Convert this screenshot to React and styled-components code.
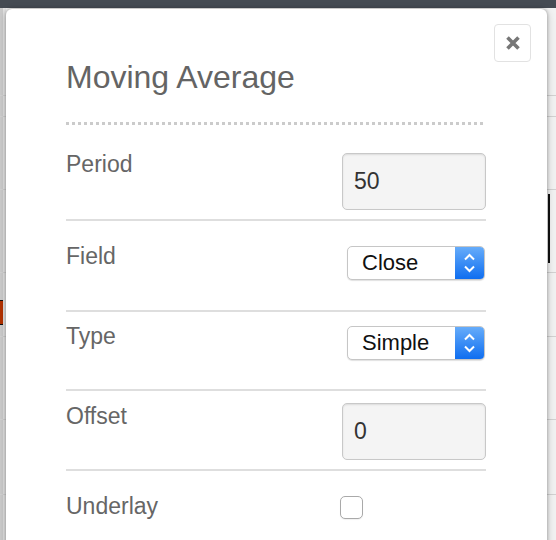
import React from 'react';
import styled, { createGlobalStyle } from 'styled-components';

const GlobalStyle = createGlobalStyle`
    body {
        margin: 0;
        font-family: 'Liberation Sans', Arial, sans-serif;
        background: #f0f0f0;
    }
`;

const Page = styled.div`
    position: relative;
    width: 556px;
    height: 540px;
    overflow: hidden;
    background: linear-gradient(to right, #cbcbcb 0, #cbcbcb 3px, #e4e4e4 3px, #e4e4e4 6px, #f2f2f2 6px);
`;

const Backdrop = styled.div`
    display: flex;
    flex-direction: column;
`;

const TopBar = styled.div`
    height: 8px;
    background: #454b53;
`;

const BgRow = styled.div`
    box-sizing: border-box;
    height: ${(p) => p.$h}px;
    border-bottom: 1px solid #d2d2d2;
    display: flex;
    justify-content: space-between;
    align-items: flex-start;
`;

const RedMark = styled.div`
    margin-top: 27px;
    width: 3px;
    height: 23px;
    background: #b33200;
    border-top: 1px solid #111;
    border-bottom: 1px solid #111;
`;

const BlackMark = styled.div`
    margin: 4px 6px 0 auto;
    width: 2px;
    height: 69px;
    background: #111;
`;

const Dialog = styled.div`
    position: absolute;
    left: 6px;
    top: 9px;
    width: 541px;
    height: 580px;
    box-sizing: border-box;
    padding: 50px 61px 0 60px;
    background: #fff;
    border-radius: 6px;
    box-shadow: 0 0 3px 1px rgba(0, 0, 0, 0.18), 0 2px 8px rgba(0, 0, 0, 0.22);
`;

const CloseButton = styled.button`
    position: absolute;
    top: 15px;
    right: 16px;
    width: 37px;
    height: 38px;
    padding: 0;
    display: flex;
    align-items: center;
    justify-content: center;
    background: #fff;
    border: 1px solid #e2e2e2;
    border-radius: 4px;
`;

const Title = styled.h1`
    margin: 0;
    font-size: 32px;
    line-height: 36px;
    font-weight: normal;
    color: #646464;
    padding-bottom: 27px;
`;

const DottedRule = styled.div`
    height: 3px;
    background: repeating-linear-gradient(to right, #cbcbcb 0, #cbcbcb 3px, transparent 3px, transparent 6px);
`;

const Row = styled.div`
    display: flex;
    align-items: flex-start;
    padding: ${(p) => p.$pt}px 0 ${(p) => p.$pb}px;
    border-bottom: ${(p) => (p.$last ? 'none' : '2px solid #dedede')};
`;

const Label = styled.div`
    flex: none;
    width: 276px;
    margin-top: ${(p) => p.$lift || 0}px;
    font-size: 23px;
    line-height: 17px;
    color: #666;
`;

const TextInput = styled.input`
    width: 144px;
    height: 57px;
    box-sizing: border-box;
    margin: 0;
    padding: 0 11px;
    border: 1px solid #c8c8c8;
    border-radius: 5px;
    background: #f4f4f4;
    box-shadow: inset 0 1px 2px rgba(0, 0, 0, 0.1);
    font-family: 'Liberation Sans', Arial, sans-serif;
    font-size: 23px;
    color: #333;
    outline: none;
`;

const SelectBox = styled.div`
    margin-left: 5px;
    width: 138px;
    height: 34px;
    box-sizing: border-box;
    display: flex;
    align-items: stretch;
    border: 1px solid #c6c6c6;
    border-radius: 5px;
    background: #fff;
    box-shadow: 0 1px 1px rgba(0, 0, 0, 0.12);
    overflow: hidden;
`;

const SelectText = styled.span`
    flex: 1;
    display: flex;
    align-items: center;
    padding-left: 14px;
    font-size: 22px;
    color: #111;
`;

const SelectArrows = styled.span`
    width: 29px;
    display: flex;
    align-items: center;
    justify-content: center;
    background: linear-gradient(to bottom, #66acfa, #0f6ef0);
`;

const Checkbox = styled.input`
    appearance: none;
    margin: 0 0 0 -2px;
    width: 23px;
    height: 23px;
    box-sizing: border-box;
    border: 1px solid #a9a9a9;
    border-radius: 5px;
    background: #fff;
    box-shadow: 0 1px 1px rgba(0, 0, 0, 0.06);
`;

const bgRows = [88, 21, 73, 83, 64, 83, 75, 60];

function Select({ value }) {
    return (
        <SelectBox>
            <SelectText>{value}</SelectText>
            <SelectArrows>
                <svg width="29" height="32" viewBox="0 0 29 32">
                    <path d="M10 12.5 L14.5 8 L19 12.5" fill="none" stroke="#fff" strokeWidth="2" />
                    <path d="M10 19.5 L14.5 24 L19 19.5" fill="none" stroke="#fff" strokeWidth="2" />
                </svg>
            </SelectArrows>
        </SelectBox>
    );
}

export default function App() {
    return (
        <>
            <GlobalStyle />
            <Page>
                <Backdrop>
                    <TopBar />
                    {bgRows.map((h, i) => (
                        <BgRow key={i} $h={h}>
                            {i === 4 && <RedMark />}
                            {i === 3 && <BlackMark />}
                        </BgRow>
                    ))}
                </Backdrop>
                <Dialog>
                    <CloseButton>
                        <svg width="16" height="16" viewBox="0 0 16 16">
                            <path d="M2.5 2.5 L13.5 13.5 M13.5 2.5 L2.5 13.5" stroke="#777" strokeWidth="3.6" />
                        </svg>
                    </CloseButton>
                    <Title>Moving Average</Title>
                    <DottedRule />
                    <Row $pt={28} $pb={9}>
                        <Label $lift={3}>Period</Label>
                        <TextInput defaultValue="50" />
                    </Row>
                    <Row $pt={25} $pb={30}>
                        <Label $lift={2}>Field</Label>
                        <Select value="Close" />
                    </Row>
                    <Row $pt={14} $pb={29}>
                        <Label $lift={2}>Type</Label>
                        <Select value="Simple" />
                    </Row>
                    <Row $pt={12} $pb={9}>
                        <Label $lift={5}>Offset</Label>
                        <TextInput defaultValue="0" />
                    </Row>
                    <Row $pt={25} $pb={0} $last>
                        <Label $lift={2}>Underlay</Label>
                        <Checkbox type="checkbox" />
                    </Row>
                </Dialog>
            </Page>
        </>
    );
}
